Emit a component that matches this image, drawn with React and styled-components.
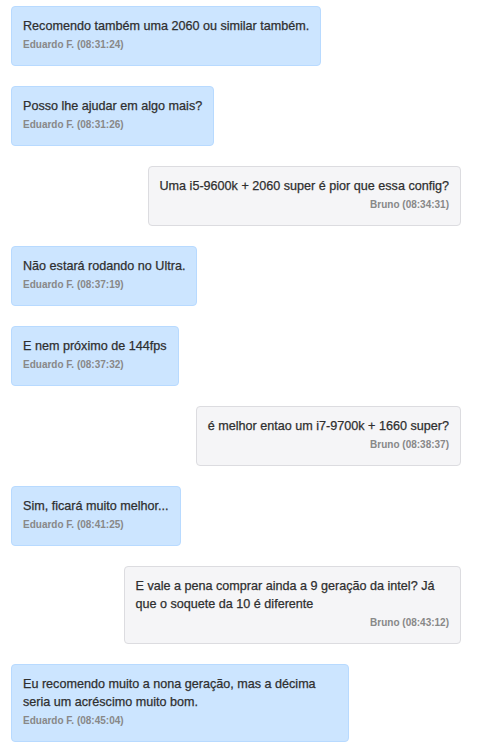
import React from 'react'
import styled, { createGlobalStyle } from 'styled-components'

const GlobalStyle = createGlobalStyle`
	body {
		margin: 0;
		background: #fff;
		font-family: "Liberation Sans", Arial, sans-serif;
	}
`;

const messages = [
	{ mine: false, text: 'Recomendo também uma 2060 ou similar também.', author: 'Eduardo F.', time: '08:31:24' },
	{ mine: false, text: 'Posso lhe ajudar em algo mais?', author: 'Eduardo F.', time: '08:31:26' },
	{ mine: true, text: 'Uma i5-9600k + 2060 super é pior que essa config?', author: 'Bruno', time: '08:34:31' },
	{ mine: false, text: 'Não estará rodando no Ultra.', author: 'Eduardo F.', time: '08:37:19' },
	{ mine: false, text: 'E nem próximo de 144fps', author: 'Eduardo F.', time: '08:37:32' },
	{ mine: true, text: 'é melhor entao um i7-9700k + 1660 super?', author: 'Bruno', time: '08:38:37' },
	{ mine: false, text: 'Sim, ficará muito melhor...', author: 'Eduardo F.', time: '08:41:25' },
	{ mine: true, text: 'E vale a pena comprar ainda a 9 geração da intel? Já que o soquete da 10 é diferente', author: 'Bruno', time: '08:43:12' },
	{ mine: false, text: 'Eu recomendo muito a nona geração, mas a décima seria um acréscimo muito bom.', author: 'Eduardo F.', time: '08:45:04' },
];

function App() {
	return (
		<>
			<GlobalStyle />
			<Chat>
				{messages.map((m) => (
					<Bubble key={m.time} mine={m.mine ? 1 : 0}>
						<Text>{m.text}</Text>
						<Meta mine={m.mine ? 1 : 0}>
							{m.author} ({m.time})
						</Meta>
					</Bubble>
				))}
			</Chat>
		</>
	);
}

const Chat = styled.div`
	display: flex;
	flex-direction: column;
	gap: 20px;
	padding: 6px 24px 12px 11px;
`;

const Bubble = styled.div`
	align-self: ${({ mine }) => (mine ? 'flex-end' : 'flex-start')};
	max-width: 75%;
	box-sizing: border-box;
	padding: 10px 11px 13px;
	border-radius: 4px;
	border: 1px solid ${({ mine }) => (mine ? '#dcdce0' : '#b8daff')};
	background: ${({ mine }) => (mine ? '#f5f5f7' : '#cce5ff')};
	color: #2f2f2f;
`;

const Text = styled.p`
	margin: 0;
	font-size: 12.6px;
	line-height: 18px;
	-webkit-text-stroke: 0.25px #2f2f2f;
`;

const Meta = styled.p`
	margin: 3px 0 0;
	font-size: 10px;
	line-height: 14px;
	font-weight: bold;
	color: #888;
	text-align: ${({ mine }) => (mine ? 'right' : 'left')};
`;

export default App
